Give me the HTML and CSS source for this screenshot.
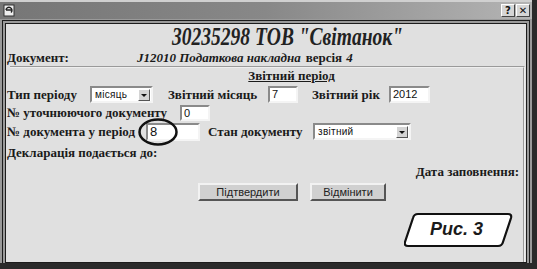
FILE: index.html
```html
<!DOCTYPE html>
<html lang="uk">
    <head>
        <meta charset="UTF-8" />
        <meta name="viewport" content="width=device-width, initial-scale=1.0" />
        <title>30235298 ТОВ "Світанок"</title>
        <link rel="stylesheet" href="styles.css">
    </head>
    <body>
        <div class="window">
            <div class="titlebar">
                <svg class="app-icon" width="13" height="13" viewBox="0 0 13 13">
                    <rect x="1" y="1" width="10" height="11" fill="#eee" stroke="#333" />
                    <path d="M3 6 h6 M3 6 a3 3 0 1 1 5 2.5" fill="none" stroke="#222" stroke-width="1.4" />
                </svg>
                <div class="title-buttons">
                    <span class="tb-btn">?</span>
                    <span class="tb-btn">✕</span>
                </div>
            </div>

            <div class="frame">
                <h1 class="heading"><span>30235298 ТОВ "Світанок"</span></h1>
                <div class="doc-row">
                    <span class="label lbl-doc">Документ:</span>
                    <span class="doc-name">J12010 Податкова накладна</span>
                    <span class="label">версія</span>
                    <span class="doc-ver">4</span>
                </div>

                <div class="section">
                    <div class="section-title">Звітний період</div>

                    <div class="row">
                        <span class="label lbl-type">Тип періоду</span>
                        <div class="select sel-period"><span>місяць</span><i class="arrow"></i></div>
                        <span class="label lbl-month">Звітний місяць</span>
                        <div class="input in-month">7</div>
                        <span class="label lbl-year">Звітний рік</span>
                        <div class="input in-year">2012</div>
                    </div>

                    <div class="row row-small">
                        <span class="label lbl-clar">№ уточнюючого документу</span>
                        <div class="input in-clar">0</div>
                    </div>

                    <div class="row">
                        <span class="label lbl-num">№ документа у період</span>
                        <div class="input in-num">8</div>
                        <span class="label lbl-state">Стан документу</span>
                        <div class="select sel-state"><span>звітний</span><i class="arrow"></i></div>
                    </div>

                    <div class="decl">Декларація подається до:</div>
                    <div class="date">Дата заповнення:</div>

                    <div class="actions">
                        <button class="btn btn-ok">Підтвердити</button>
                        <button class="btn btn-cancel">Відмінити</button>
                    </div>
                </div>
            </div>

            <!-- annotation marks drawn over the screenshot -->
            <svg class="circle-mark" width="42" height="30" viewBox="0 0 42 30">
                <ellipse cx="21" cy="15" rx="18.5" ry="12.5" fill="none" stroke="#111" stroke-width="2.5" />
            </svg>
            <div class="figure">
                <svg width="110" height="36" viewBox="0 0 110 36">
                    <path d="M14 2 H104 Q108 2 107 6 L99 30 Q98 34 94 34 H4 Q0 34 1 30 L9 6 Q10 2 14 2 Z" fill="#fff" stroke="#111" stroke-width="2.2" />
                </svg>
                <span class="figure-text">Рис. 3</span>
            </div>
        </div>
    </body>
</html>
```

FILE: styles.css
```css
body {
    margin: 0;
    background-color: #2a2a2a;
    font-family: "Liberation Serif", "DejaVu Serif", serif;
    color: #1a1a1a;
}
.window {
    position: relative;
    width: 532px;
    height: 263px;
    background-color: #9a9a9a;
    border-top: 2px solid #d0d0d0;
    box-sizing: border-box;
}
.titlebar {
    height: 17px;
    display: flex;
    align-items: center;
    justify-content: space-between;
    padding: 0 2px 0 3px;
    background: linear-gradient(to right, #767676, #888 50%, #b4b4b4);
}
.title-buttons {
    display: flex;
    gap: 1px;
}
.tb-btn {
    width: 12px;
    height: 11px;
    line-height: 11px;
    font: bold 10px "DejaVu Sans", sans-serif;
    text-align: center;
    color: #111;
    background-color: #d6d6d6;
    border: 1px solid;
    border-color: #fff #444 #444 #fff;
}
.frame {
    height: 238px;
    margin: 1px 2px 0 2px;
    border: 4px double #1c1c1c;
    background-color: #e0e0e0;
    background-clip: padding-box;
    padding-left: 1px;
    overflow: hidden;
}
.heading {
    margin: 0;
    padding-left: 42px;
    text-align: center;
    font-family: "Liberation Serif", "DejaVu Serif", serif;
    font-size: 19.5px;
    font-style: italic;
    font-weight: bold;
    line-height: 26px;
    color: #222;
}
.heading span {
    display: inline-block;
    transform: translateY(2px) scaleY(1.25);
    transform-origin: 50% 70%;
}
.doc-row {
    display: flex;
    align-items: baseline;
    height: 16px;
    font-size: 13px;
}
.label {
    font-family: "Liberation Serif", "DejaVu Serif", serif;
    font-size: 13px;
    font-weight: bold;
    white-space: nowrap;
    flex: none;
}
.lbl-doc {
    width: 130px;
}
.doc-name {
    margin-right: 5px;
    font-style: italic;
    font-weight: bold;
}
.doc-ver {
    margin-left: 4px;
    font-style: italic;
    font-weight: bold;
}
.section {
    margin-left: 3px;
    margin-right: 1px;
    height: 200px;
    border-top: 2px groove #eee;
    border-right: 2px groove #eee;
}
.section-title {
    padding-left: 50px;
    text-align: center;
    font-size: 13px;
    font-weight: bold;
    text-decoration: underline;
    line-height: 15px;
    margin-bottom: 2px;
}
.row {
    display: flex;
    align-items: center;
    height: 19px;
    margin-left: -3px;
}
.row-small {
    height: 18px;
}
.input,
.select {
    box-sizing: border-box;
    flex: none;
    height: 17px;
    background-color: #fff;
    border: 2px solid;
    border-color: #8a8a8a #f4f4f4 #f4f4f4 #8a8a8a;
    font: 11px "Liberation Sans", Arial, sans-serif;
    line-height: 13px;
    padding-left: 2px;
    color: #111;
}
.select {
    display: flex;
    justify-content: space-between;
    align-items: center;
    padding-left: 3px;
    padding-right: 0;
    font-size: 10px;
    letter-spacing: 0.3px;
}
.arrow {
    width: 12px;
    height: 12px;
    margin-right: 1px;
    background-color: #d4d4d4;
    border: 1px solid;
    border-color: #fff #555 #555 #fff;
    box-sizing: border-box;
    position: relative;
}
.arrow::after {
    content: "";
    position: absolute;
    left: 2px;
    top: 4px;
    border-left: 3px solid transparent;
    border-right: 3px solid transparent;
    border-top: 3px solid #111;
}
.lbl-type {
    width: 83px;
}
.sel-period {
    width: 63px;
}
.lbl-month {
    width: 100px;
    margin-left: 15px;
}
.in-month {
    width: 30px;
}
.lbl-year {
    width: 77px;
    margin-left: 14px;
}
.in-year {
    width: 41px;
}
.lbl-clar {
    width: 173px;
}
.in-clar {
    width: 30px;
    height: 16px;
}
.lbl-num {
    width: 139px;
}
.in-num {
    width: 54px;
    height: 18px;
    font-size: 13px;
}
.lbl-state {
    width: 105px;
    margin-left: 8px;
}
.sel-state {
    width: 98px;
}
.decl {
    margin-left: -3px;
    margin-top: 3px;
    font-size: 13px;
    font-weight: bold;
    line-height: 18px;
}
.date {
    text-align: right;
    padding-right: 4px;
    font-size: 13px;
    font-weight: bold;
    line-height: 19px;
}
.actions {
    display: flex;
    gap: 12px;
    margin-left: 188px;
    margin-top: 2px;
}
.btn {
    height: 18px;
    padding: 0;
    background-color: #d0d0d0;
    border: 2px solid;
    border-color: #f2f2f2 #555 #555 #f2f2f2;
    font: 11px "Liberation Sans", Arial, sans-serif;
    color: #222;
}
.btn-ok {
    width: 100px;
}
.btn-cancel {
    width: 76px;
}
.circle-mark {
    position: absolute;
    left: 137px;
    top: 115px;
}
.figure {
    position: absolute;
    left: 404px;
    top: 210px;
    width: 110px;
    height: 36px;
}
.figure svg {
    position: absolute;
    left: 0;
    top: 0;
}
.figure-text {
    position: absolute;
    left: 26px;
    top: 7px;
    font: italic bold 18px "Liberation Sans", Arial, sans-serif;
    color: #1a1a1a;
}
.app-icon {
    display: block;
}
```
